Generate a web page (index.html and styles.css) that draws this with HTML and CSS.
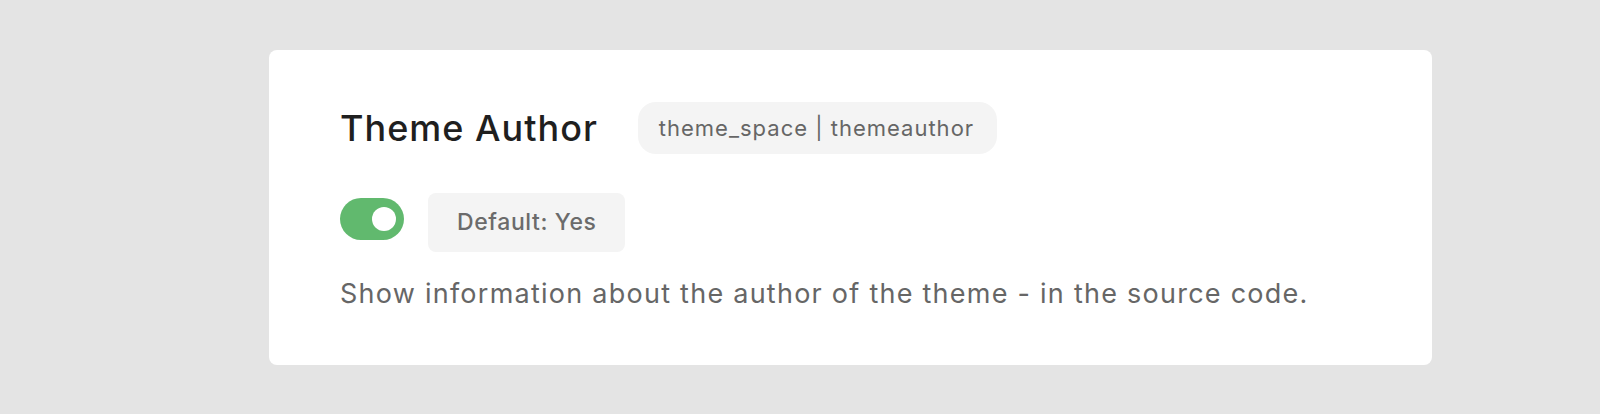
FILE: index.html
```html
<!DOCTYPE html>
<html lang="en">
<head>
    <meta charset="UTF-8">
    <title>Theme Author</title>
    <link rel="stylesheet" href="styles.css">
</head>
<body>
<div class="page">
    <div class="option-card">
        <div class="option-head">
            <h3 class="option-title">Theme Author</h3>
            <span class="option-key">theme_space | themeauthor</span>
        </div>
        <div class="option-controls">
            <label class="switch">
                <input type="checkbox" checked>
                <span class="switch-knob"></span>
            </label>
            <span class="option-default">Default: Yes</span>
        </div>
        <p class="option-desc">Show information about the author of the theme - in the source code.</p>
    </div>
</div>
</body>
</html>
```

FILE: styles.css
```css
body {
    margin: 0;
    background: #e4e4e4;
    font-family: Inter, "Noto Sans", sans-serif;
}

.page {
    padding: 50px 168px 50px 269px;
}

.option-card {
    background: #fff;
    border-radius: 8px;
    padding: 52px 71px 50px;
}

.option-head {
    display: flex;
    align-items: center;
    gap: 40px;
}

.option-title {
    margin: 0;
    font-size: 36px;
    font-weight: 500;
    letter-spacing: 1px;
    color: #1f1f1f;
}

.option-key {
    display: inline-block;
    background: #f4f4f4;
    color: #666;
    font-size: 22px;
    letter-spacing: 1px;
    line-height: 52px;
    padding: 0 23px 0 21px;
    border-radius: 18px;
}

.option-controls {
    display: flex;
    align-items: center;
    gap: 24px;
    margin-top: 39px;
}

.switch {
    position: relative;
    display: inline-block;
    width: 64px;
    height: 42px;
    margin-top: -8px;
}

.switch input {
    display: none;
}

.switch-knob {
    position: absolute;
    inset: 0;
    background: #61b96e;
    border-radius: 21px;
}

.switch-knob::after {
    content: "";
    position: absolute;
    right: 8px;
    top: 9px;
    width: 24px;
    height: 24px;
    border-radius: 50%;
    background: #fff;
}

.option-default {
    display: inline-block;
    background: #f4f4f4;
    color: #6b6b6b;
    font-size: 23px;
    font-weight: 500;
    letter-spacing: 0.6px;
    line-height: 59px;
    padding: 0 28px 0 29px;
    border-radius: 8px;
}

.option-desc {
    margin: 21px 0 0;
    font-size: 27px;
    letter-spacing: 1.25px;
    line-height: 42px;
    color: #666;
}
```
